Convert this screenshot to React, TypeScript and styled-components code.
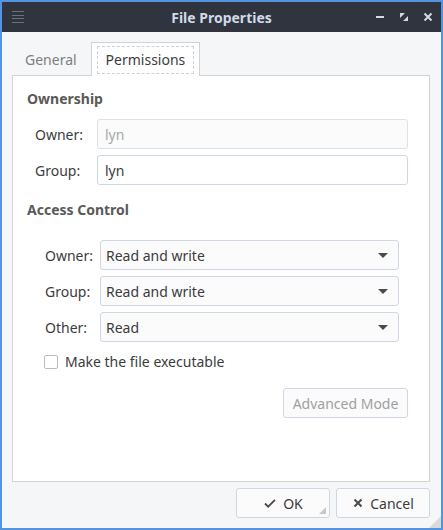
import styled, { createGlobalStyle } from "styled-components";

const Global = createGlobalStyle`
  html, body { margin: 0; padding: 0; }
  body { font-family: "Noto Sans", "Open Sans", sans-serif; font-size: 14px; color: #3c3c3c; }
  * { box-sizing: border-box; }
`;

const Window = styled.div`
  width: 443px;
  height: 530px;
  border: 2px solid #5294e2;
  background: #f5f6f7;
  display: flex;
  flex-direction: column;
  position: relative;
`;

const TitleBar = styled.div`
  height: 30px;
  background: #2f343f;
  display: flex;
  align-items: center;
  padding: 0 8px 0 9px;
  position: relative;
`;

const Title = styled.div`
  position: absolute;
  left: 0;
  right: 0;
  text-align: center;
  color: #cfdae7;
  font-weight: bold;
  font-size: 14px;
  pointer-events: none;
`;

const Controls = styled.div`
  margin-left: auto;
  display: flex;
  gap: 14px;
  align-items: center;
`;

const Body = styled.div`
  flex: 1;
  display: flex;
  flex-direction: column;
  padding: 10px 11px 0 10px;
`;

const Tabs = styled.div`
  display: flex;
  align-items: flex-end;
  height: 34px;
  position: relative;
  z-index: 1;
  margin-bottom: -1px;
`;

const Tab = styled.div<{ active?: boolean }>`
  height: 34px;
  padding: 0 ${(p) => (p.active ? "5px" : "13px")} 0 ${(p) => (p.active ? "5px" : "12px")};
  display: flex;
  align-items: center;
  color: ${(p) => (p.active ? "#3c3c3c" : "#7e7e7e")};
  background: ${(p) => (p.active ? "#fff" : "transparent")};
  border: 1px solid ${(p) => (p.active ? "#d3d3d3" : "transparent")};
  border-bottom: none;
`;

const FocusBox = styled.span`
  border: 1px dashed #d0d0d0;
  padding: 3px 8px 4px;
`;

const Panel = styled.div`
  height: 407px;
  background: #fff;
  border: 1px solid #d3d3d3;
  padding: 13px 21px 0 14px;
  display: flex;
  flex-direction: column;
`;

const Heading = styled.div`
  font-weight: bold;
  color: #5a5a5a;
  height: 20px;
  line-height: 20px;
`;

const FormGrid = styled.div<{ indent: number; labelW: number; right: number; top: number }>`
  display: grid;
  grid-template-columns: ${(p) => p.labelW}px 1fr;
  row-gap: 6px;
  align-items: center;
  margin: ${(p) => p.top}px ${(p) => p.right}px 0 ${(p) => p.indent}px;
`;

const Label = styled.div`
  color: #3c3c3c;
`;

const Input = styled.div<{ disabled?: boolean }>`
  height: 30px;
  border: 1px solid ${(p) => (p.disabled ? "#dde1ea" : "#cfd6e6")};
  border-radius: 3px;
  background: ${(p) => (p.disabled ? "#fbfbfc" : "#fff")};
  color: ${(p) => (p.disabled ? "#a8a8a8" : "#3c3c3c")};
  padding: 0 8px 0 7px;
  display: flex;
  align-items: center;
`;

const Combo = styled(Input)`
  background: #fbfbfc;
  padding: 0 10px 0 5px;
  justify-content: space-between;
`;

const Arrow = styled.span`
  width: 0;
  height: 0;
  border-left: 5px solid transparent;
  border-right: 5px solid transparent;
  border-top: 5px solid #4a4a4a;
`;

const CheckRow = styled.label`
  display: flex;
  align-items: center;
  gap: 7px;
  margin: 10px 0 0 17px;
`;

const Box = styled.span`
  width: 14px;
  height: 14px;
  border: 1px solid #b8bcc6;
  border-radius: 2px;
  background: #fff;
`;

const Button = styled.div<{ disabled?: boolean }>`
  height: 30px;
  border: 1px solid #cfd6e6;
  border-radius: 3px;
  background: #fbfbfc;
  color: ${(p) => (p.disabled ? "#a0a0a0" : "#3c3c3c")};
  display: flex;
  align-items: center;
  justify-content: center;
  gap: 6px;
  position: relative;
`;

const AdvancedRow = styled.div`
  display: flex;
  justify-content: flex-end;
  margin-top: 17px;
  ${Button} { width: 125px; }
`;

const Footer = styled.div`
  display: flex;
  justify-content: flex-end;
  gap: 6px;
  margin-top: 6px;
  ${Button} { width: 94px; }
`;

const Corner = styled.span`
  position: absolute;
  right: 3px;
  bottom: 3px;
  width: 0;
  height: 0;
  border-left: 7px solid transparent;
  border-bottom: 7px solid #c8c8c8;
`;

const Grip = styled.span`
  position: absolute;
  right: 0;
  bottom: 0;
  width: 0;
  height: 0;
  border-left: 12px solid transparent;
  border-bottom: 12px solid #dadada;
`;

export default function App() {
  return (
    <>
      <Global />
      <Window>
        <TitleBar>
          <svg width="14" height="14" viewBox="0 0 14 14">
            <g fill="#6b707a">
              <rect x="1" y="1" width="12" height="1" />
              <rect x="1" y="5" width="12" height="1" />
              <rect x="1" y="8" width="12" height="1" />
              <rect x="1" y="12" width="12" height="1" />
            </g>
          </svg>
          <Title>File Properties</Title>
          <Controls>
            <svg width="10" height="10" viewBox="0 0 10 10">
              <rect x="1" y="4" width="8" height="2" fill="#cfdae7" />
            </svg>
            <svg width="10" height="10" viewBox="0 0 10 10">
              <path d="M1 1h5L1 6z M9 9H4l5-5z" fill="#cfdae7" />
            </svg>
            <svg width="10" height="10" viewBox="0 0 10 10">
              <path d="M1.5 1.5l7 7M8.5 1.5l-7 7" stroke="#cfdae7" strokeWidth="2" />
            </svg>
          </Controls>
        </TitleBar>
        <Body>
          <Tabs>
            <Tab>General</Tab>
            <Tab active>
              <FocusBox>Permissions</FocusBox>
            </Tab>
          </Tabs>
          <Panel>
            <Heading>Ownership</Heading>
            <FormGrid indent={8} labelW={62} right={0} top={10}>
              <Label>Owner:</Label>
              <Input disabled>lyn</Input>
              <Label>Group:</Label>
              <Input>lyn</Input>
            </FormGrid>
            <Heading style={{ marginTop: 15 }}>Access Control</Heading>
            <FormGrid indent={18} labelW={55} right={9} top={20}>
              <Label>Owner:</Label>
              <Combo>
                Read and write <Arrow />
              </Combo>
              <Label>Group:</Label>
              <Combo>
                Read and write <Arrow />
              </Combo>
              <Label>Other:</Label>
              <Combo>
                Read <Arrow />
              </Combo>
            </FormGrid>
            <CheckRow>
              <Box />
              Make the file executable
            </CheckRow>
            <AdvancedRow>
              <Button disabled>Advanced Mode</Button>
            </AdvancedRow>
          </Panel>
          <Footer>
            <Button>
              <svg width="14" height="14" viewBox="0 0 14 14">
                <path d="M2 7.5l3.2 3.2L12 3.8" fill="none" stroke="#4a4a4a" strokeWidth="1.8" />
              </svg>
              OK
              <Corner />
            </Button>
            <Button>
              <svg width="12" height="12" viewBox="0 0 12 12">
                <path d="M2.5 2.5l7 7M9.5 2.5l-7 7" stroke="#4a4a4a" strokeWidth="2" />
              </svg>
              Cancel
            </Button>
          </Footer>
        </Body>
        <Grip />
      </Window>
    </>
  );
}
